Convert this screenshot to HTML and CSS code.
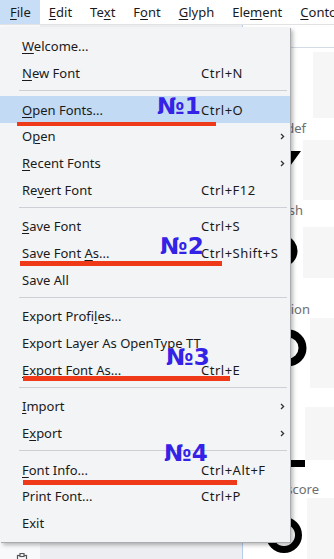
FILE: index.html
```html
<!DOCTYPE html>
<html lang="en">
<head>
  <meta charset="UTF-8">
  <meta name="viewport" content="width=device-width, initial-scale=1.0">
  <title>File menu</title>
  <link rel="stylesheet" href="styles.css">
</head>
<body>
  <div class="app">
    <nav class="menubar">
      <span class="mb-item active"><u>F</u>ile</span>
      <span class="mb-item"><u>E</u>dit</span>
      <span class="mb-item">Te<u>x</u>t</span>
      <span class="mb-item">F<u>o</u>nt</span>
      <span class="mb-item"><u>G</u>lyph</span>
      <span class="mb-item">Ele<u>m</u>ent</span>
      <span class="mb-item"><u>C</u>ontour</span>
    </nav>

    <div class="workspace">
      <aside class="sidebar">
        <svg class="side-icon" width="12" height="12" viewBox="0 0 12 12">
          <rect x="1.5" y="2.5" width="9" height="9" fill="none" stroke="#555" stroke-width="1.2"/>
          <rect x="4" y="0.5" width="4" height="3" fill="#fff" stroke="#555" stroke-width="1.2"/>
        </svg>
      </aside>
      <section class="panel"></section>
      <section class="fontwin">
        <div class="fw-head"></div>

        <div class="cell cell-a">
          <div class="pv"></div>
          <div class="name">undef</div>
        </div>

        <div class="cell cell-b">
          <div class="pv"></div>
          <svg class="glyph" width="24" height="24" viewBox="0 0 24 24">
            <polygon points="10,1 23,1 7,23 -6,23" fill="#000"/>
          </svg>
          <div class="name">slash</div>
        </div>

        <div class="cell cell-c">
          <div class="pv"></div>
          <svg class="glyph" width="30" height="30" viewBox="0 0 30 30">
            <path d="M4 4 A11 11 0 0 1 19 24" fill="none" stroke="#000" stroke-width="7"/>
          </svg>
          <div class="name">question</div>
        </div>

        <div class="cell cell-d">
          <div class="pv"></div>
          <svg class="glyph" width="40" height="40" viewBox="0 0 40 40">
            <circle cx="20" cy="20" r="14.5" fill="none" stroke="#000" stroke-width="8"/>
          </svg>
        </div>

        <div class="cell cell-e">
          <div class="pv"></div>
          <div class="bar"></div>
          <div class="name">underscore</div>
        </div>

        <div class="cell cell-f">
          <div class="pv"></div>
          <svg class="glyph" width="40" height="40" viewBox="0 0 40 40">
            <circle cx="20" cy="20" r="14.5" fill="none" stroke="#000" stroke-width="7"/>
          </svg>
        </div>
      </section>
    </div>

    <!-- opened File menu -->
    <div class="menu">
      <div class="mi"><span class="lbl"><u>W</u>elcome...</span></div>
      <div class="mi"><span class="lbl"><u>N</u>ew Font</span><span class="key">Ctrl+N</span></div>
      <div class="sep"></div>
      <div class="mi hot">
        <span class="lbl"><u>O</u>pen Fonts...</span><span class="key">Ctrl+O</span>
        <b class="tag tag-1">№1</b><i class="mark mark-1"></i>
      </div>
      <div class="mi"><span class="lbl">O<u>p</u>en</span>
        <svg class="sub" width="5" height="7" viewBox="0 0 5 7"><path d="M1 1l2.6 2.5L1 6" fill="none" stroke="#333" stroke-width="1.3"/></svg>
      </div>
      <div class="mi"><span class="lbl"><u>R</u>ecent Fonts</span>
        <svg class="sub" width="5" height="7" viewBox="0 0 5 7"><path d="M1 1l2.6 2.5L1 6" fill="none" stroke="#333" stroke-width="1.3"/></svg>
      </div>
      <div class="mi"><span class="lbl">Re<u>v</u>ert Font</span><span class="key">Ctrl+F12</span></div>
      <div class="sep"></div>
      <div class="mi"><span class="lbl"><u>S</u>ave Font</span><span class="key">Ctrl+S</span></div>
      <div class="mi">
        <span class="lbl">Save Font <u>A</u>s...</span><span class="key">Ctrl+Shift+S</span>
        <b class="tag tag-2">№2</b><i class="mark mark-2"></i>
      </div>
      <div class="mi"><span class="lbl">Save All</span></div>
      <div class="sep"></div>
      <div class="mi"><span class="lbl">Export Profi<u>l</u>es...</span></div>
      <div class="mi"><span class="lbl">Export Layer As OpenType TT</span></div>
      <div class="mi">
        <span class="lbl"><u>E</u>xport Font As...</span><span class="key">Ctrl+E</span>
        <b class="tag tag-3">№3</b><i class="mark mark-3"></i>
      </div>
      <div class="sep"></div>
      <div class="mi"><span class="lbl"><u>I</u>mport</span>
        <svg class="sub" width="5" height="7" viewBox="0 0 5 7"><path d="M1 1l2.6 2.5L1 6" fill="none" stroke="#333" stroke-width="1.3"/></svg>
      </div>
      <div class="mi"><span class="lbl">E<u>x</u>port</span>
        <svg class="sub" width="5" height="7" viewBox="0 0 5 7"><path d="M1 1l2.6 2.5L1 6" fill="none" stroke="#333" stroke-width="1.3"/></svg>
      </div>
      <div class="sep"></div>
      <div class="mi">
        <span class="lbl"><u>F</u>ont Info...</span><span class="key">Ctrl+Alt+F</span>
        <b class="tag tag-4">№4</b><i class="mark mark-4"></i>
      </div>
      <div class="mi"><span class="lbl">Print Font...</span><span class="key">Ctrl+P</span></div>
      <div class="mi"><span class="lbl">Exit</span></div>
    </div>
  </div>
</body>
</html>
```

FILE: styles.css
```css
body {
  margin: 0;
  font-family: 'Noto Sans', 'Open Sans', sans-serif;
  font-size: 13px;
  color: #1a1a1a;
  background: #fff;
}
u {
  text-decoration-thickness: 1px;
  text-underline-offset: 2px;
}
.app {
  position: relative;
  width: 334px;
  height: 559px;
  overflow: hidden;
}

/* menubar */
.menubar {
  display: flex;
  height: 24px;
  border-bottom: 1px solid #e2e2e2;
  background: #fff;
  white-space: nowrap;
}
.mb-item {
  display: flex;
  align-items: center;
  padding: 0 9px;
  line-height: 24px;
}
.mb-item.active {
  background: #c8def6;
  padding-left: 10px;
}

/* app behind the menu */
.workspace {
  display: flex;
  height: 534px;
}
.sidebar {
  width: 40px;
  flex: none;
  background: #f8f9fa;
}
.side-icon {
  display: block;
  margin: 528px 0 0 16px;
}
.panel {
  width: 202px;
  flex: none;
  background: #eceef1;
  border-right: 1px solid #b8cdea;
}
.fontwin {
  flex: 1;
  background: #fff;
}
.fw-head {
  height: 22px;
  border-bottom: 1px solid #d3dbe6;
}
.cell {
  position: relative;
  overflow: hidden;
  box-sizing: border-box;
}
.pv {
  background: #f6f6f6;
}
.name {
  font-size: 13px;
  line-height: 16px;
  color: #6e6e6e;
  text-align: right;
  white-space: nowrap;
}
.glyph {
  position: absolute;
}
.cell-a { height: 89px; }
.cell-a .pv { margin: 4px 0 0 70px; height: 66px; }
.cell-a .name { margin-top: 2px; padding-right: 28px; }

.cell-b { height: 81px; }
.cell-b .pv { margin: 3px 0 0 60px; height: 60px; }
.cell-b .glyph { left: 35px; top: 13px; }
.cell-b .name { margin-top: 2px; padding-right: 31px; }

.cell-c { height: 100px; }
.cell-c .pv { margin: 9px 0 0 60px; height: 51px; }
.cell-c .glyph { left: 27px; top: 19px; }
.cell-c .name { margin-top: 23px; padding-right: 24px; }

.cell-d { height: 80px; }
.cell-d .pv { margin-left: 67px; height: 70px; }
.cell-d .glyph { left: 25px; top: 10px; }

.cell-e { height: 100px; }
.cell-e .pv { margin: 9px 0 0 62px; height: 53px; }
.cell-e .bar {
  position: absolute;
  left: 20px;
  top: 62px;
  width: 42px;
  height: 7px;
  background: #000;
}
.cell-e .name { margin-top: 21px; padding-right: 15px; }

.cell-f { height: 70px; }
.cell-f .pv { margin-left: 64px; height: 70px; }
.cell-f .glyph { left: 21px; top: 17px; }

/* File menu */
.menu {
  position: absolute;
  left: 0;
  top: 27px;
  width: 290px;
  padding: 6px 0;
  background: #f3f4f6;
  box-shadow: 1px 1px 0 #a9abae, 3px 3px 4px rgba(0, 0, 0, 0.28);
}
.mi {
  position: relative;
  display: flex;
  align-items: center;
  height: 26.67px;
  padding-left: 22px;
  white-space: nowrap;
}
.mi.hot {
  background: #c2daf4;
}
.lbl {
  width: 179px;
  flex: none;
}
.key {
  letter-spacing: 0.5px;
}
.sub {
  position: absolute;
  right: 5px;
  top: 10px;
}
.sep {
  height: 1px;
  margin: 4px 3px 5px 19px;
  background: #cdd0d4;
}

/* hand-drawn annotations */
.tag {
  position: absolute;
  font-family: 'DejaVu Sans', sans-serif;
  font-weight: bold;
  font-size: 23px;
  line-height: 1;
  letter-spacing: 0;
  color: #3422e6;
}
.tag-1 { left: 157px; top: -1px; }
.tag-2 { left: 160px; top: -5px; }
.tag-3 { left: 166px; top: -10px; }
.tag-4 { left: 164px; top: -14px; }
.mark {
  position: absolute;
  height: 5px;
  background: #ee3a18;
}
.mark-1 { left: 17px; width: 199px; top: 26px; height: 4px; }
.mark-2 { left: 20px; width: 202px; top: 21px; }
.mark-3 { left: 23px; width: 207px; top: 20px; }
.mark-4 { left: 23px; width: 214px; top: 24px; }
```
